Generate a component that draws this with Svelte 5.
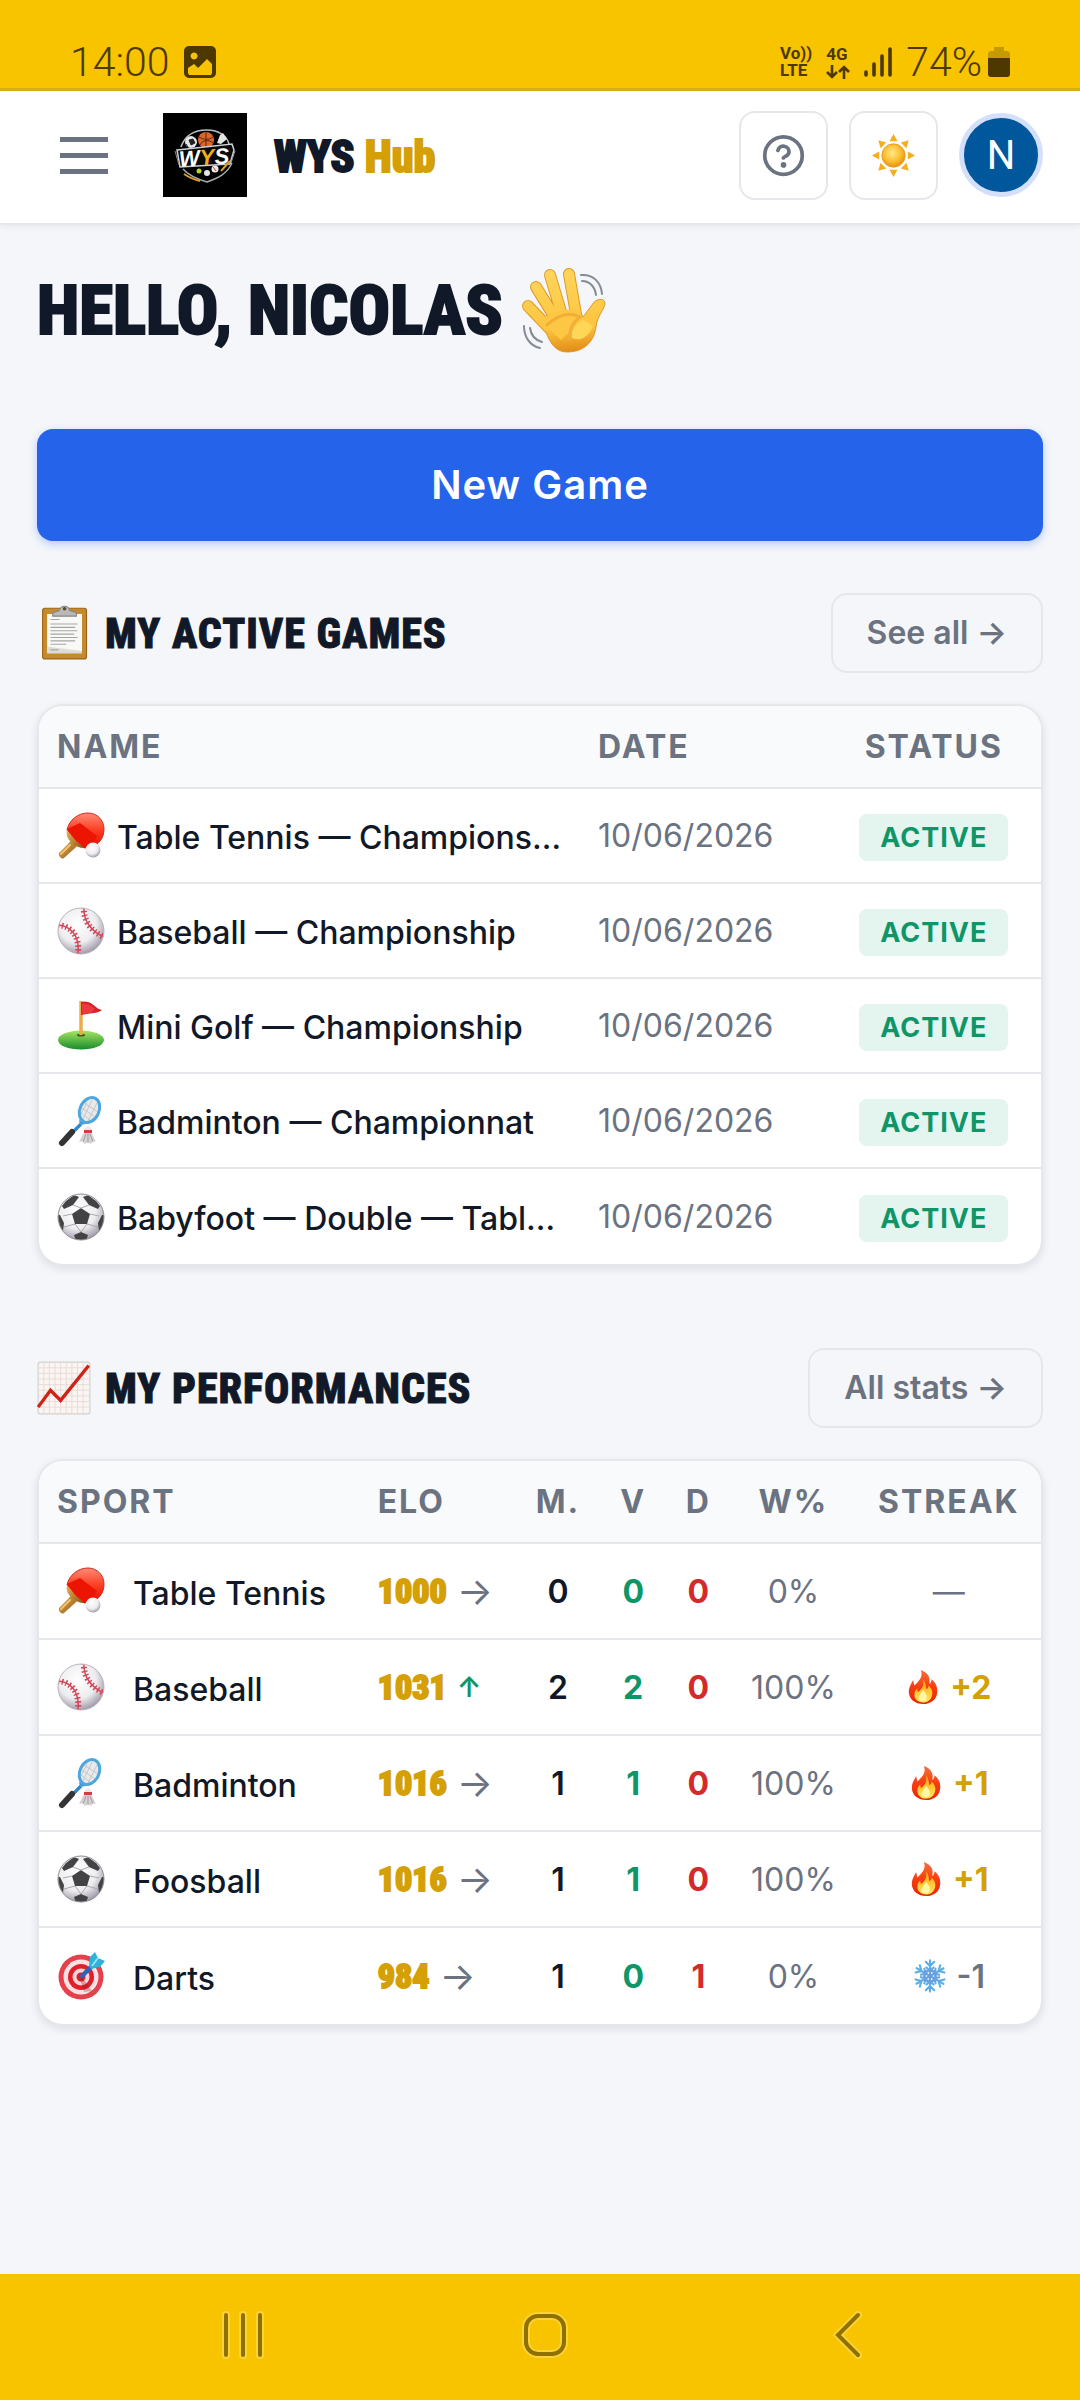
<script>
  const games = [
    { icon: 'tabletennis', name: 'Table Tennis — Championship', date: '10/06/2026', status: 'ACTIVE' },
    { icon: 'baseball', name: 'Baseball — Championship', date: '10/06/2026', status: 'ACTIVE' },
    { icon: 'golf', name: 'Mini Golf — Championship', date: '10/06/2026', status: 'ACTIVE' },
    { icon: 'badminton', name: 'Badminton — Championnat', date: '10/06/2026', status: 'ACTIVE' },
    { icon: 'soccer', name: 'Babyfoot — Double — Tableau', date: '10/06/2026', status: 'ACTIVE' }
  ];

  const stats = [
    { icon: 'tabletennis', sport: 'Table Tennis', elo: 1000, trend: '→', played: 0, won: 0, lost: 0, rate: 0, streak: 0 },
    { icon: 'baseball', sport: 'Baseball', elo: 1031, trend: '↑', played: 2, won: 2, lost: 0, rate: 100, streak: 2 },
    { icon: 'badminton', sport: 'Badminton', elo: 1016, trend: '→', played: 1, won: 1, lost: 0, rate: 100, streak: 1 },
    { icon: 'soccer', sport: 'Foosball', elo: 1016, trend: '→', played: 1, won: 1, lost: 0, rate: 100, streak: 1 },
    { icon: 'darts', sport: 'Darts', elo: 984, trend: '→', played: 1, won: 0, lost: 1, rate: 0, streak: -1 }
  ];

  const rays = [0, 45, 90, 135, 180, 225, 270, 315];
  const arms = [0, 60, 120, 180, 240, 300];
</script>

<!-- shared gradients -->
<svg class="defs" width="0" height="0" aria-hidden="true">
  <defs>
    <linearGradient id="g-red" x1="0" y1="0" x2="0" y2="1">
      <stop offset="0" stop-color="#ff8a75" />
      <stop offset="0.5" stop-color="#fb3d22" />
      <stop offset="1" stop-color="#e00c00" />
    </linearGradient>
    <radialGradient id="g-ball" cx="0.42" cy="0.35" r="0.68">
      <stop offset="0" stop-color="#ffffff" />
      <stop offset="0.6" stop-color="#ededf0" />
      <stop offset="1" stop-color="#9c95a3" />
    </radialGradient>
    <linearGradient id="g-green" x1="0" y1="0" x2="0" y2="1">
      <stop offset="0" stop-color="#a5e663" />
      <stop offset="1" stop-color="#178c2b" />
    </linearGradient>
    <radialGradient id="g-sun" cx="0.45" cy="0.4" r="0.6">
      <stop offset="0" stop-color="#ffe98a" />
      <stop offset="0.6" stop-color="#fcbf30" />
      <stop offset="1" stop-color="#e98f10" />
    </radialGradient>
    <linearGradient id="g-hand" gradientUnits="userSpaceOnUse" x1="40" y1="0" x2="48" y2="86">
      <stop offset="0" stop-color="#ffd65c" />
      <stop offset="0.7" stop-color="#fcc540" />
      <stop offset="1" stop-color="#e08a16" />
    </linearGradient>
    <linearGradient id="g-fire" x1="0" y1="0" x2="0" y2="1">
      <stop offset="0" stop-color="#f4713a" />
      <stop offset="0.5" stop-color="#f83d12" />
      <stop offset="1" stop-color="#e92409" />
    </linearGradient>
    <linearGradient id="g-flame" x1="0" y1="0" x2="0" y2="1">
      <stop offset="0" stop-color="#ffa313" />
      <stop offset="1" stop-color="#ffea55" />
    </linearGradient>
    <linearGradient id="g-wood" x1="0" y1="0" x2="1" y2="1">
      <stop offset="0" stop-color="#e9b45c" />
      <stop offset="1" stop-color="#8d5413" />
    </linearGradient>
    <linearGradient id="g-snow" gradientUnits="userSpaceOnUse" x1="0" y1="-17" x2="0" y2="17">
      <stop offset="0" stop-color="#5caee6" />
      <stop offset="1" stop-color="#7f86da" />
    </linearGradient>
    <clipPath id="c-ball"><circle cx="24" cy="24" r="22.5" /></clipPath>
  </defs>
</svg>

{#snippet emoji(name)}
  <svg class="emoji" viewBox="0 0 48 48" aria-hidden="true">
    {#if name === 'tabletennis'}
      <path d="M17 25l6 6-6 6-10 9c-2 2-6-2-5-5l9-9z" fill="url(#g-wood)" />
      <path d="M13 33l-9 9" stroke="#f3c36e" stroke-width="2" stroke-linecap="round" />
      <path d="M10 18C12 8 21 1 31 1c9 0 16 7 16 16 0 9-5 15-12 18l-8 1z" fill="url(#g-red)" stroke="#cf2a1c" />
      <path d="M10 18c-1 4 0 7 2 10l6 5c4 3 8 3 9 3z" fill="url(#g-wood)" />
      <path d="M10 17c6 9 10 14 18 18l7 0 5-11-17-13z" fill="#ec1403" />
      <circle cx="36" cy="38" r="7.5" fill="url(#g-ball)" />
    {:else if name === 'baseball'}
      <circle cx="24" cy="24" r="23" fill="url(#g-ball)" stroke="#b8b3bb" />
      <g clip-path="url(#c-ball)" fill="none" stroke="#d2475a">
        <path d="M1 18c13 1 22 11 20 29M27 0c-1 12 6 24 20 30" stroke-width="1.5" />
        <path d="M1 18c13 1 22 11 20 29M27 0c-1 12 6 24 20 30" stroke-width="6" stroke-dasharray="1.5 2.4" />
      </g>
    {:else if name === 'golf'}
      <ellipse cx="24" cy="38" rx="23" ry="9.5" fill="url(#g-green)" />
      <ellipse cx="24" cy="33" rx="4" ry="1.6" fill="#46570e" />
      <path d="M24 -1v34" stroke="#edab4c" stroke-width="3.5" />
      <path d="M24 0c6-2 12 2 15 5 2 2 4 2 6 3-5 4-13 3-21 5z" fill="#dc1f28" />
      <path d="M25 2c5-1 9 2 13 5l-4 4-9 1z" fill="#f04c4e" opacity="0.6" />
    {:else if name === 'badminton'}
      <path d="M24 27L14 37" stroke="#2f86cf" stroke-width="3.2" />
      <path d="M15 35L5 46" stroke="#333436" stroke-width="6" stroke-linecap="round" />
      <path d="M23 28l-1-5 7 4z" fill="#3f9bdc" />
      <ellipse cx="32.5" cy="13" rx="9.5" ry="13" transform="rotate(25 32.5 13)" fill="#e8e9ea" stroke="#4ea6de" stroke-width="3" />
      <path d="M25 11l13 9M27 6l14 9M24 16l9 7M26 22l9-19M31 24l9-18M24 17l6-12" stroke="#b7b9bd" stroke-width="0.7" />
      <path d="M28 33l5 0 6 12-3-1-2 3-3-2-3 2-2-3-4 1z" fill="#d3d1d1" />
      <path d="M29 37l-3 8M31 37v9M33 37l3 8" stroke="#9e9999" stroke-width="0.9" />
      <path d="M27 34c0-6 8-6 8 0l-1 2h-6z" fill="#e9e6e6" />
      <path d="M27 33h8v3h-8z" fill="#d83c43" />
    {:else if name === 'soccer'}
      <circle cx="24" cy="24" r="23" fill="url(#g-ball)" stroke="#8f8b93" />
      <g clip-path="url(#c-ball)" fill="#434345">
        <path d="M24 15l9 6-3 10H18l-3-10z" />
        <path d="M9 8l8-6 5 2-6 8-9 4-2-3zM39 8l-8-6-5 2 6 8 9 4 2-3zM0 22l3 0 4 8-1 8-5-4zM48 22l-3 0-4 8 1 8 5-4zM17 42l7-3 7 3-2 6H19z" />
        <path d="M24 15L16 12M24 15l8-3M15 21l-9 2M33 21l9 2M18 31l-11 3M30 31l11 3M18 31l6 8M30 31l-6 8" stroke="#aaa7ad" stroke-width="1" />
      </g>
    {:else if name === 'darts'}
      <circle cx="24" cy="25" r="22.5" fill="#e5404b" />
      <circle cx="24" cy="25" r="17.5" fill="#fbe1e3" />
      <circle cx="24" cy="25" r="13" fill="#e31e2b" />
      <circle cx="24" cy="25" r="8.5" fill="#f9d3d6" />
      <circle cx="24" cy="25" r="4.5" fill="#d91f2b" />
      <path d="M25 25l10 14-8 1-4-13z" fill="#8b1b24" opacity="0.3" />
      <path d="M25 24L36 13" stroke="#2c64b8" stroke-width="4.5" stroke-linecap="round" />
      <path d="M32 14l1-9 5-5 3 6 7 3-5 6-9 2z" fill="#2fb1dc" />
      <path d="M35 14L41 6" stroke="#8fe3f7" stroke-width="2" />
    {:else if name === 'clipboard'}
      <rect x="5" y="2" width="39" height="45" rx="2" fill="#c68a2e" stroke="#9a6517" />
      <path d="M9 7h31v35H9z" fill="#f8f8f6" />
      <path d="M9 36l31 4v2H9z" fill="#dcdcda" />
      <path d="M12 12h8M12 16h24M12 19h22M12 22h24M12 25h21M12 28h24M12 31h22M12 34h14M12 39h7" stroke="#a5a5a5" stroke-width="0.9" />
      <path d="M14 9V6l6-2c1-5 8-5 9 0l6 2v3z" fill="#b9b9b9" stroke="#868686" />
      <circle cx="24.5" cy="2.5" r="1.6" fill="#5f4a2a" />
    {:else if name === 'chart'}
      <rect x="1" y="1" width="46" height="46" rx="2" fill="#f8f5f3" stroke="#d3cfcd" />
      <path d="M6 1v46M11 1v46M16 1v46M21 1v46M26 1v46M31 1v46M36 1v46M41 1v46M1 6h46M1 11h46M1 16h46M1 21h46M1 26h46M1 31h46M1 36h46M1 41h46" stroke="#ead9d5" stroke-width="0.8" />
      <path d="M1 41l11-15 9 9L46 4" fill="none" stroke="#cf2318" stroke-width="3" />
    {:else if name === 'fire'}
      <path d="M21 0c13 5 13 13 12 20 2-2 3-4 3-7 6 5 9 11 8 19-1 10-9 16-20 16S4 41 4 31c0-8 4-12 6-17 1 3 1 6 2 8 5-6 13-11 9-22z" fill="url(#g-fire)" />
      <path d="M24 13c5 6 3 11 5 14 2-1 3-3 3-5 4 4 6 8 5 13-1 7-7 11-13 11-7 0-13-5-12-12 0-4 2-6 4-8 0 2 0 4 1 5 5-4 9-8 7-18z" fill="url(#g-flame)" />
      <path d="M24 28c3 4 7 8 5 13-1 4-9 4-11 0-1-5 4-8 6-13z" fill="#fff7a8" />
    {:else if name === 'snow'}
      <g transform="translate(24 24)" fill="none" stroke="url(#g-snow)" stroke-width="3" stroke-linecap="round">
        {#each arms as angle}
          <path d="M0 0l0.1-22M-6-20l6 6 6-6M-5-12l5 5 5-5M-4-7l8 0.1" transform="rotate({angle})" />
        {/each}
      </g>
    {:else if name === 'wave'}
      <g transform="scale(0.558)">
        <g fill="none" stroke="#dd9a2a" stroke-width="12" stroke-linecap="round">
          <path d="M7 39l23 24M15 20l21 34M29 8l12 40M48 7l7 40" />
        </g>
        <path d="M20 52c5 10 8 33 26 33 17 0 27-10 29-25 1-11 9-18 9-24-1-6-10-4-13 2l-9 12-4-8-29 5z" fill="url(#g-hand)" stroke="#e0962a" />
        <g fill="none" stroke="url(#g-hand)" stroke-width="10" stroke-linecap="round">
          <path d="M7 39l23 24M15 20l21 34M29 8l12 40M48 7l7 40" />
        </g>
        <path d="M24 50c6-4 20-10 32-7l4 10-20 20-14-13z" fill="#fdc744" />
        <path d="M26 58c10-9 22-14 33-8-7 5-11 12-10 22" fill="none" stroke="#f3ae35" stroke-width="3" stroke-linecap="round" />
        <path d="M62 53c-9 5-12 11-11 18 8 4 17-1 21-12z" fill="#fed658" />
        <path d="M60 8c12-1 20 7 21 19M61 14c8 0 13 6 14 14M3 59c0 11 6 20 16 22M9 61c1 7 5 12 12 14" fill="none" stroke="#848b94" stroke-width="2" stroke-linecap="round" />
      </g>
    {:else if name === 'sun'}
      {#each rays as angle}
        <path d="M24 0l4.5 8h-9z" fill="#f5ae20" transform="rotate({angle} 24 24)" />
      {/each}
      <circle cx="24" cy="24" r="13" fill="url(#g-sun)" stroke="#e49a23" />
    {/if}
  </svg>
{/snippet}

<div class="screen">
  <div class="status-bar">
    <div class="status-group">
      <span class="clock">14:00</span>
      <svg class="photo" viewBox="0 0 32 32" aria-hidden="true">
        <path fill-rule="evenodd" d="M5 0h22a5 5 0 0 1 5 5v22a5 5 0 0 1-5 5H5a5 5 0 0 1-5-5V5a5 5 0 0 1 5-5zM4 22v5l1 2h22l1-2v-9l-5-5-9 9-4-4zM10 6.500a3.500 3.500 0 1 0 .1 0z" />
      </svg>
    </div>
    <div class="status-group">
      <span class="tiny"><span>Vo))</span><span>LTE</span></span>
      <span class="tiny network">
        <span>4G</span>
        <svg viewBox="0 0 24 14" aria-hidden="true">
          <path d="M6 0v12M1 7l5 5 5-5M18 14V2M13 7l5-5 5 5" fill="none" stroke="currentColor" stroke-width="2.600" />
        </svg>
      </span>
      <svg class="signal" viewBox="0 0 28 30" aria-hidden="true">
        <path d="M2 25v3M10 17v11M18 9v19M26 2v26" stroke="currentColor" stroke-width="3.600" stroke-linecap="round" />
      </svg>
      <span class="battery">
        <span class="clock">74%</span>
        <svg viewBox="0 0 22 30" aria-hidden="true">
          <path d="M6 0h10v4h4l2 2v5H0V6l2-2h4z" opacity="0.3" />
          <path d="M0 11h22v16a3 3 0 0 1-3 3H3a3 3 0 0 1-3-3z" />
        </svg>
      </span>
    </div>
  </div>

  <header>
    <button class="menu" aria-label="Menu"><span></span><span></span><span></span></button>
    <a class="brand" href="/">
      <svg class="logo" viewBox="0 0 84 84" role="img" aria-label="WYS logo">
        <rect width="84" height="84" />
        <path d="M18 34C22 22 32 17 44 17c12 0 20 6 22 14" fill="none" stroke="#b9bcc0" stroke-width="1.500" />
        <circle cx="28" cy="29" r="6" fill="#e7e7e7" />
        <path d="M26 27l4-1 2 4-4 2zM23 31l2 3M30 23l3 2" fill="#222" stroke="#222" />
        <circle cx="43" cy="27" r="8" fill="#d9662a" />
        <path d="M36 24c5 3 10 3 14 0M43 19v15M37 32c2-5 9-6 13-2" fill="none" stroke="#5f240b" />
        <path d="M54 30l3-8 3-2 4 6-6 5z" fill="#e3e5e7" />
        <path d="M14 37l55-6 2 6-4 14-50 3z" fill="#08090b" stroke="#cfd1d4" stroke-width="1.500" />
        <path d="M20 56c6 7 14 10 24 13 11-4 20-8 25-19" fill="none" stroke="#a7a9ad" stroke-width="1.500" />
        <path d="M21 61c6 4 11 6 16 7M58 58l9-10" stroke="#dd9c23" stroke-width="2" fill="none" />
        <path d="M12 38l4 14M68 50l4-12" stroke="#8a8d92" />
        <circle cx="36" cy="58" r="2.500" fill="#b9d42b" />
        <circle cx="44" cy="60" r="3" fill="#e5e5e5" />
        <circle cx="52" cy="56" r="3.500" fill="#f0eaea" />
        <path d="M50 54l3 4" stroke="#c33" />
        <text x="16" y="52" class="logo-text" transform="rotate(-4 42 44)">W<tspan fill="#f0ad1f">Y</tspan>S</text>
      </svg>
      <span class="brand-name">WYS <em>Hub</em></span>
    </a>
    <div class="actions">
      <button class="square" aria-label="Help">
        <svg class="help" viewBox="0 0 24 24" aria-hidden="true">
          <circle cx="12" cy="12" r="10" />
          <path d="M9 9.300a3 3 0 0 1 5.900 1c0 2-3 2.300-3 3" />
          <circle class="dot" cx="12" cy="17" r="1.500" />
        </svg>
      </button>
      <button class="square" aria-label="Toggle theme">{@render emoji('sun')}</button>
      <button class="avatar" aria-label="Account">N</button>
    </div>
  </header>

  <main>
    <h1>HELLO, NICOLAS {@render emoji('wave')}</h1>

    <button class="primary">New Game</button>

    <section>
      <div class="section-head">
        <h2>{@render emoji('clipboard')} MY ACTIVE GAMES</h2>
        <a class="ghost" href="#games">See all →</a>
      </div>
      <div class="card">
        <table class="games">
          <colgroup><col class="name" /><col class="date" /><col class="state" /></colgroup>
          <thead>
            <tr><th>NAME</th><th>DATE</th><th class="mid">STATUS</th></tr>
          </thead>
          <tbody>
            {#each games as game}
              <tr>
                <td>
                  <div class="label">{@render emoji(game.icon)}<span>{game.name}</span></div>
                </td>
                <td class="muted">{game.date}</td>
                <td class="mid"><span class="badge">{game.status}</span></td>
              </tr>
            {/each}
          </tbody>
        </table>
      </div>
    </section>

    <section>
      <div class="section-head">
        <h2>{@render emoji('chart')} MY PERFORMANCES</h2>
        <a class="ghost" href="#stats">All stats →</a>
      </div>
      <div class="card">
        <table class="stats">
          <colgroup>
            <col class="sport" /><col class="elo-col" /><col class="played" /><col class="won" />
            <col class="lost" /><col class="rate" /><col class="streak-col" />
          </colgroup>
          <thead>
            <tr>
              <th>SPORT</th><th>ELO</th><th class="mid">M.</th><th class="mid">V</th>
              <th class="mid">D</th><th class="mid">W%</th><th class="mid">STREAK</th>
            </tr>
          </thead>
          <tbody>
            {#each stats as row}
              <tr>
                <td>
                  <div class="label wide">{@render emoji(row.icon)}<span>{row.sport}</span></div>
                </td>
                <td>
                  <div class="elo">
                    <b>{row.elo}</b>
                    <span class={row.trend === '↑' ? 'trend up' : 'trend'}>{row.trend}</span>
                  </div>
                </td>
                <td class="mid strong">{row.played}</td>
                <td class="mid win">{row.won}</td>
                <td class="mid loss">{row.lost}</td>
                <td class="mid muted">{row.rate}%</td>
                <td class="mid muted">
                  {#if row.streak > 0}
                    <span class="streak hot">{@render emoji('fire')}+{row.streak}</span>
                  {:else if row.streak < 0}
                    <span class="streak">{@render emoji('snow')}{row.streak}</span>
                  {:else}
                    —
                  {/if}
                </td>
              </tr>
            {/each}
          </tbody>
        </table>
      </div>
    </section>
  </main>

  <nav>
    <button aria-label="Recent apps">
      <svg viewBox="0 0 48 48" aria-hidden="true">
        <path class="halo" d="M7 4v40M24 4v40M41 4v40" />
        <path d="M7 4v40M24 4v40M41 4v40" />
      </svg>
    </button>
    <button aria-label="Home">
      <svg viewBox="0 0 48 48" aria-hidden="true">
        <rect class="halo" x="5" y="5" width="38" height="38" rx="12" />
        <rect x="5" y="5" width="38" height="38" rx="12" />
      </svg>
    </button>
    <button aria-label="Back">
      <svg viewBox="0 0 48 48" aria-hidden="true">
        <path class="halo" d="M34 4L14 24l20 20" />
        <path d="M34 4L14 24l20 20" />
      </svg>
    </button>
  </nav>
</div>

<style>
  :global(body) {
    background: #f4f6fa;
  }

  .screen {
    display: flex;
    flex-direction: column;
    min-height: 100vh;
    background: #f4f6fa;
    color: #111827;
    font-family: Inter, Roboto, sans-serif;
    font-size: 32px;
  }

  button {
    padding: 0;
    border: 0;
    background: none;
    font: inherit;
    color: inherit;
  }

  a {
    color: inherit;
    text-decoration: none;
  }

  svg {
    display: block;
    flex: none;
  }

  .defs {
    position: absolute;
  }

  .emoji {
    width: 48px;
    height: 48px;
    overflow: visible;
  }

  .status-bar {
    display: flex;
    justify-content: space-between;
    align-items: flex-end;
    box-sizing: border-box;
    height: 91px;
    padding: 0 70px 5px 70px;
    border-bottom: 3px solid #deae14;
    background: #f8c400;
    color: #4d3800;
    font-family: Roboto, sans-serif;
  }

  .status-bar svg {
    fill: currentColor;
  }

  .status-group {
    display: flex;
    align-items: center;
    gap: 14px;
  }

  .clock {
    font-size: 41px;
    font-weight: 300;
    line-height: 42px;
  }

  .photo {
    width: 32px;
    height: 32px;
  }

  .tiny {
    display: flex;
    flex-direction: column;
    font-size: 17px;
    font-weight: 700;
    line-height: 17px;
  }

  .network svg {
    width: 24px;
    height: 14px;
    margin-top: 2px;
  }

  .signal {
    width: 28px;
    height: 30px;
  }

  .battery {
    display: flex;
    align-items: center;
    gap: 6px;
  }

  .battery svg {
    width: 22px;
    height: 30px;
  }

  header {
    display: flex;
    align-items: center;
    box-sizing: border-box;
    height: 134px;
    padding: 0 37px 4px 60px;
    border-bottom: 2px solid #e5e7eb;
    background: #fff;
    box-shadow: 0 2px 8px rgba(17, 24, 39, 0.06);
  }

  .menu {
    display: flex;
    flex-direction: column;
    gap: 11px;
    width: 48px;
    margin-right: 55px;
  }

  .menu span {
    height: 5px;
    background: #6b7280;
  }

  .brand {
    display: flex;
    align-items: center;
    gap: 27px;
  }

  .logo {
    width: 84px;
    height: 84px;
  }

  .logo-text {
    fill: #fff;
    font: italic 900 22px 'Liberation Sans', sans-serif;
  }

  .brand-name {
    padding-top: 4px;
    font: 800 44px 'Roboto Condensed', 'Liberation Sans Narrow', sans-serif;
    -webkit-text-stroke: 2px currentColor;
  }

  .brand-name em {
    color: #d4a005;
    font-style: normal;
  }

  .actions {
    display: flex;
    align-items: center;
    gap: 21px;
    margin-left: auto;
  }

  .square {
    display: grid;
    place-items: center;
    box-sizing: border-box;
    width: 89px;
    height: 89px;
    border: 2px solid #e5e7eb;
    border-radius: 16px;
  }

  .square .emoji {
    width: 43px;
    height: 43px;
  }

  .help {
    width: 45px;
    height: 45px;
    fill: none;
    stroke: #6b7280;
    stroke-width: 2;
    stroke-linecap: round;
  }

  .help .dot {
    fill: #6b7280;
    stroke: none;
  }

  .avatar {
    box-sizing: border-box;
    width: 84px;
    height: 84px;
    border: 5px solid #d4e0fb;
    border-radius: 50%;
    background: #01579b;
    color: #fff;
    font-family: Roboto, sans-serif;
    font-size: 40px;
  }

  main {
    flex: 1;
    padding: 40px 37px;
  }

  h1 {
    display: flex;
    align-items: center;
    gap: 18px;
    height: 90px;
    margin: 0 0 74px;
    font: 800 69px 'Roboto Condensed', 'Liberation Sans Narrow', sans-serif;
    -webkit-text-stroke: 2px currentColor;
  }

  h1 .emoji {
    width: 86px;
    height: 86px;
  }

  .primary {
    width: 100%;
    height: 112px;
    padding-bottom: 2px;
    border-radius: 16px;
    background: #2563eb;
    box-shadow: 0 3px 8px rgba(37, 99, 235, 0.3);
    color: #fff;
    font-size: 40px;
    font-weight: 600;
    letter-spacing: 1px;
  }

  section {
    margin-top: 52px;
  }

  section + section {
    margin-top: 82px;
  }

  .section-head {
    display: flex;
    align-items: center;
    justify-content: space-between;
    margin-bottom: 31px;
  }

  h2 {
    display: flex;
    align-items: center;
    gap: 14px;
    margin: 0;
    font: 800 42px 'Roboto Condensed', 'Liberation Sans Narrow', sans-serif;
    -webkit-text-stroke: 1px currentColor;
    letter-spacing: 1px;
  }

  h2 .emoji {
    width: 54px;
    height: 54px;
  }

  .ghost {
    box-sizing: border-box;
    height: 80px;
    padding: 0 34px;
    border: 2px solid #e5e7eb;
    border-radius: 16px;
    color: #6b7280;
    font-weight: 600;
    line-height: 76px;
  }

  .card {
    overflow: hidden;
    border: 2px solid #e5e7eb;
    border-radius: 26px;
    background: #fff;
    box-shadow: 0 3px 8px rgba(17, 24, 39, 0.1);
  }

  table {
    width: 100%;
    border-collapse: separate;
    border-spacing: 0;
    table-layout: fixed;
  }

  th,
  td {
    box-sizing: border-box;
    height: 95px;
    padding: 0 18px;
    border-bottom: 2px solid #e5e7eb;
    text-align: left;
    white-space: nowrap;
  }

  th {
    height: 83px;
    background: #f8fafc;
    color: #6b7280;
    font-weight: 700;
    letter-spacing: 2px;
  }

  .stats td {
    height: 96px;
  }

  tr:last-child td {
    border-bottom: 0;
  }

  .mid {
    padding: 0 4px 0 0;
    text-align: center;
  }

  .name {
    width: 54%;
  }

  .date {
    width: 25%;
  }

  .state {
    width: 21%;
  }

  .sport {
    width: 32%;
  }

  .elo-col {
    width: 16%;
  }

  .played {
    width: 8%;
  }

  .won {
    width: 7%;
  }

  .lost {
    width: 6%;
  }

  .rate {
    width: 13%;
  }

  .streak-col {
    width: 18%;
  }

  .label {
    display: flex;
    align-items: center;
    gap: 12px;
    font-weight: 500;
  }

  .label.wide {
    gap: 28px;
  }

  .label span {
    overflow: hidden;
    padding-top: 4px;
    text-overflow: ellipsis;
  }

  .muted {
    color: #6b7280;
  }

  .games td.mid {
    padding-top: 4px;
  }

  .badge {
    display: inline-block;
    padding: 0 21px;
    border-radius: 8px;
    background: #e4f4ee;
    color: #0f9668;
    font-size: 27px;
    font-weight: 700;
    line-height: 47px;
    letter-spacing: 1px;
  }

  .elo {
    display: flex;
    align-items: center;
    gap: 10px;
  }

  .elo b {
    color: #d4a005;
    font: 800 34px 'Roboto Condensed', 'Liberation Sans Narrow', sans-serif;
    -webkit-text-stroke: 2px currentColor;
  }

  .trend {
    color: #6b7280;
    font-size: 38px;
    line-height: 40px;
  }

  .trend.up {
    color: #0f9668;
    font-size: 28px;
    font-weight: 600;
  }

  .strong {
    font-weight: 600;
  }

  .win {
    color: #0f9668;
    font-weight: 700;
  }

  .loss {
    color: #d42a2a;
    font-weight: 700;
  }

  .streak {
    display: flex;
    align-items: center;
    justify-content: center;
    gap: 10px;
    font-weight: 600;
  }

  .streak.hot {
    color: #d4a005;
    font-weight: 700;
  }

  .streak .emoji {
    width: 34px;
    height: 34px;
  }

  nav {
    display: grid;
    grid-template-columns: repeat(3, 1fr);
    height: 126px;
    padding: 0 81px 0 92px;
    background: #f8c400;
  }

  nav button {
    display: grid;
    place-items: center;
    padding-bottom: 4px;
  }

  nav svg {
    width: 48px;
    height: 48px;
    fill: none;
    stroke: #8f7100;
    stroke-width: 4;
    stroke-linecap: round;
  }

  nav .halo {
    stroke: #fbd23c;
    stroke-width: 8;
  }
</style>
